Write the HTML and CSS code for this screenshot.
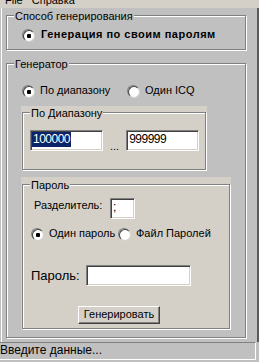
FILE: index.html
```html
<!DOCTYPE html>
<html lang="ru">
<head>
    <meta charset="UTF-8">
    <title>Генератор паролей</title>
    <link rel="stylesheet" href="styles.css">
</head>
<body>
    <div class="menubar">
        <span>File</span>
        <span>Справка</span>
    </div>

    <div class="main">
        <!-- Способ генерирования -->
        <div class="group group-method">
            <div class="group-title">Способ генерирования</div>
            <label class="option method-option"><span class="radio on"></span>Генерация по своим паролям</label>
        </div>

        <!-- Генератор -->
        <div class="group group-generator">
            <div class="group-title">Генератор</div>
            <div class="gen-options">
                <label class="option"><span class="radio on"></span>По диапазону</label>
                <label class="option"><span class="radio"></span>Один ICQ</label>
            </div>

            <div class="panel panel-range">
                <div class="group">
                    <div class="group-title">По Диапазону</div>
                    <div class="range-row">
                        <div class="edit edit-range"><span class="edit-text selected">100000</span></div>
                        <span class="dots">...</span>
                        <div class="edit edit-range"><span class="edit-text">999999</span></div>
                    </div>
                </div>
            </div>

            <div class="panel panel-password">
                <div class="group">
                    <div class="group-title">Пароль</div>
                    <div class="sep-row">
                        <span class="sep-label">Разделитель:</span>
                        <div class="edit edit-sep"><span class="edit-text">;</span></div>
                    </div>
                    <div class="pass-options">
                        <label class="option"><span class="radio on"></span>Один пароль</label>
                        <label class="option"><span class="radio"></span>Файл Паролей</label>
                    </div>
                    <div class="pass-row">
                        <span class="pass-label">Пароль:</span>
                        <div class="edit edit-pass"></div>
                    </div>
                    <button class="gen-btn">Генерировать</button>
                </div>
            </div>
        </div>
    </div>

    <div class="status">Введите данные...</div>
</body>
</html>
```

FILE: styles.css
```css
/* General Styles */
* {
    box-sizing: border-box;
}

body {
    margin: 0;
    width: 259px;
    height: 362px;
    overflow: hidden;
    background: #c0c0c0;
    font-family: 'Liberation Sans', Arial, sans-serif;
    font-size: 11px;
    line-height: 13px;
    color: #000;
}

.menubar {
    height: 8px;
    overflow: hidden;
    display: flex;
    gap: 9px;
    padding-left: 5px;
    background: #d4d0c8;
}

.menubar span {
    margin-top: -6px;
}

.main {
    height: 334px;
    margin-left: 1px;
    padding-top: 7px;
    border-left: 1px solid #fff;
    border-right: 2px solid #5a5a5a;
}

/* Group boxes */
.group {
    border: 1px solid #808080;
    box-shadow: inset 1px 1px #fff, 1px 1px #fff;
}

.group-title {
    display: table;
    margin: -6px 0 0 7px;
    padding: 0 1px;
    background: #c0c0c0;
}

.group-method {
    width: 240px;
    height: 35px;
    margin-left: 4px;
}

.group-generator {
    width: 240px;
    height: 275px;
    margin: 13px 0 0 4px;
}

.panel {
    padding: 6px 1px 1px;
    background: #d4d0c8;
}

.panel .group-title {
    background: #d4d0c8;
}

.panel-range {
    width: 186px;
    margin: 9px 0 0 14px;
}

.panel-range .group {
    height: 58px;
}

.panel-password {
    width: 210px;
    padding-top: 7px;
    margin: 6px 0 0 14px;
}

.panel-password .group {
    height: 145px;
}

/* Radio buttons */
.option {
    display: flex;
    align-items: center;
    gap: 6px;
    white-space: nowrap;
}

.radio {
    flex: none;
    width: 12px;
    height: 12px;
    border-radius: 50%;
    border: 1px solid;
    border-color: #808080 #fff #fff #808080;
}

.radio::before {
    content: "";
    display: block;
    width: 10px;
    height: 10px;
    border-radius: 50%;
    border: 1px solid;
    border-color: #404040 #d4d0c8 #d4d0c8 #404040;
    background: #fff;
}

.radio.on::before {
    background: radial-gradient(circle, #000 0 2px, #fff 2.5px);
}

.method-option {
    margin: 5px 0 0 15px;
    gap: 7px;
    font-weight: bold;
    letter-spacing: 0.5px;
}

.gen-options {
    display: grid;
    grid-template-columns: 105px auto;
    margin: 13px 0 0 15px;
}

.pass-options {
    display: grid;
    grid-template-columns: 87px auto;
    margin: 8px 0 0 8px;
}

/* Edits */
.edit {
    height: 21px;
    padding: 1px;
    background: #fff;
    border: 1px solid;
    border-color: #808080 #fff #fff #808080;
    box-shadow: inset 1px 1px #404040, inset -1px -1px #d4d0c8;
}

.edit-text {
    display: inline-block;
    padding: 0 1px;
    font-size: 12px;
    line-height: 15px;
    letter-spacing: -0.5px;
}

.selected {
    background: #0a246a;
    color: #fff;
}

.edit-range {
    width: 73px;
}

.edit-sep {
    width: 25px;
}

.edit-pass {
    width: 105px;
}

.range-row {
    display: flex;
    align-items: flex-end;
    margin: 10px 0 0 7px;
}

.dots {
    margin: 0 7px -2px;
}

.sep-row {
    display: flex;
    align-items: flex-start;
    margin: 6px 0 0 11px;
}

.sep-label {
    width: 76px;
    margin-top: 1px;
}

.pass-row {
    display: flex;
    align-items: center;
    margin: 25px 0 0 8px;
}

.pass-label {
    width: 55px;
    font-size: 13px;
    line-height: 15px;
}

button {
    font: inherit;
    color: #000;
}

.gen-btn {
    display: block;
    width: 82px;
    height: 18px;
    margin: 20px 0 0 55px;
    padding: 0 0 2px;
    background: #d4d0c8;
    border: 1px solid;
    border-color: #fff #404040 #404040 #fff;
    box-shadow: inset -1px -1px #808080;
}

.status {
    width: 256px;
    height: 18px;
    padding-top: 1px;
    border-top: 1px solid #808080;
    border-right: 1px solid #fff;
    border-bottom: 1px solid #fff;
    font-size: 12px;
    white-space: nowrap;
}
```
